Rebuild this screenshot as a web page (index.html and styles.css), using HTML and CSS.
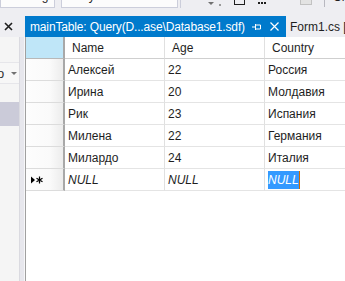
FILE: index.html
```html
<!DOCTYPE html>
<html lang="ru">

<head>
    <meta charset="UTF-8">
    <title>mainTable: Query</title>
    <link rel="stylesheet" href="styles.css">
</head>

<body>
    <div class="toolbar">
        <div class="tb-box tb-box1"><span class="tb-text">Debug</span></div>
        <div class="tb-box tb-box2"><span class="tb-text">Any CPU</span></div>
        <div class="tb-icons">
            <span class="tb-arrow"></span>
            <span class="tb-dots"></span>
            <span class="tb-square"></span>
            <span class="tb-more"></span>
            <span class="tb-grey"></span>
            <span class="tb-sep"></span>
            <span class="tb-label">Ch</span>
        </div>
    </div>

    <div class="tabrow">
        <div class="tool-close">
            <svg width="9" height="9" viewBox="0 0 9 9"><path d="M1 1L8 8M8 1L1 8" stroke="#1e1e1e" stroke-width="1.6"/></svg>
        </div>
        <div class="tab tab-active">
            <span class="tab-title">mainTable: Query(D...ase\Database1.sdf)</span>
            <svg class="tab-pin" width="9" height="8" viewBox="0 0 9 8"><path d="M0 4H3.5M3.5 1V7M3.5 2H8.5V6H3.5" stroke="#fff" fill="none" stroke-width="1"/></svg>
            <svg class="tab-x" width="9" height="9" viewBox="0 0 9 9"><path d="M0.5 0.5L8.5 8.5M8.5 0.5L0.5 8.5" stroke="#fff" stroke-width="1.2"/></svg>
        </div>
        <div class="tab">Form1.cs [</div>
    </div>

    <div class="workspace">
        <div class="side">
            <div class="combo"><span class="combo-text">o</span><span class="combo-arrow"></span></div>
            <div class="side-sel"></div>
        </div>
        <div class="splitter"></div>
        <div class="doc">
            <div class="grid">
                <div class="cell corner"></div>
                <div class="cell hcell">Name</div>
                <div class="cell hcell">Age</div>
                <div class="cell hcell">Country</div>

                <div class="cell rowhead"></div>
                <div class="cell">Алексей</div>
                <div class="cell">22</div>
                <div class="cell">Россия</div>

                <div class="cell rowhead"></div>
                <div class="cell">Ирина</div>
                <div class="cell">20</div>
                <div class="cell">Молдавия</div>

                <div class="cell rowhead"></div>
                <div class="cell">Рик</div>
                <div class="cell">23</div>
                <div class="cell">Испания</div>

                <div class="cell rowhead"></div>
                <div class="cell">Милена</div>
                <div class="cell">22</div>
                <div class="cell">Германия</div>

                <div class="cell rowhead"></div>
                <div class="cell">Милардо</div>
                <div class="cell">24</div>
                <div class="cell">Италия</div>

                <div class="cell rowhead">
                    <svg width="12" height="8" viewBox="0 0 12 8"><path d="M0 0.5L4 4L0 7.5Z" fill="#000"/><path d="M8.5 0.5V7.5M5.5 2.2L11.5 5.8M11.5 2.2L5.5 5.8" stroke="#000" stroke-width="1.2"/></svg>
                </div>
                <div class="cell null">NULL</div>
                <div class="cell null">NULL</div>
                <div class="cell null"><span class="editing">NULL</span></div>
            </div>
        </div>
    </div>
</body>

</html>
```

FILE: styles.css
```css
body {
    margin: 0;
    background-color: #fff;
    font-family: "Liberation Sans", Arial, sans-serif;
    font-size: 12px;
    color: #1e1e1e;
    overflow: hidden;
}

/* top toolbar, cut off at the top of the window */
.toolbar {
    height: 8px;
    background-color: #eeeef2;
    display: flex;
    overflow: hidden;
}

.tb-box {
    flex-shrink: 0;
    height: 7px;
    background-color: #fcfcfc;
    border: 1px solid #cccedb;
    border-top: none;
    overflow: hidden;
}

.tb-box1 {
    width: 53px;
}

.tb-box2 {
    width: 115px;
    margin-left: 6px;
}

.tb-text {
    display: block;
    margin-top: -11px;
    padding-left: 12px;
    line-height: 14px;
}

.tb-icons {
    flex: 1;
    display: flex;
    align-items: flex-start;
    border-left: 1px solid #cccedb;
    margin-left: 2px;
    padding-left: 27px;
}

.tb-arrow {
    width: 0;
    height: 0;
    margin-top: 2px;
    border-left: 3px solid transparent;
    border-right: 3px solid transparent;
    border-top: 3px solid #717171;
}

.tb-dots {
    width: 2px;
    height: 2px;
    margin: 4px 0 0 5px;
    background-color: #9a9a9a;
}

.tb-square {
    width: 9px;
    height: 4px;
    margin-left: 13px;
    border: 1px solid #1e1e1e;
    border-top: none;
}

.tb-more {
    width: 8px;
    height: 2px;
    margin: 2px 0 0 13px;
    background: repeating-linear-gradient(90deg, #1e1e1e 0 2px, transparent 2px 3px);
}

.tb-grey {
    width: 10px;
    height: 4px;
    margin-left: 34px;
    border: 1px solid #c2c2c2;
    border-top: none;
    background-color: #e3e3e3;
}

.tb-sep {
    width: 1px;
    height: 7px;
    margin-left: 12px;
    background-color: #b8b8c0;
}

.tb-label {
    margin: -10px 0 0 8px;
    line-height: 14px;
    color: #1e1e1e;
}

/* document tab strip */
.tabrow {
    height: 29px;
    display: flex;
    align-items: flex-end;
    background-color: #eeeef2;
}

.tool-close {
    flex-shrink: 0;
    width: 25px;
    height: 21px;
    display: flex;
    align-items: center;
    padding-left: 4px;
    box-sizing: border-box;
}

.tool-close svg {
    display: block;
}

.tab {
    height: 21px;
    display: flex;
    align-items: center;
    padding-left: 4px;
    white-space: nowrap;
}

.tab-active {
    flex-shrink: 0;
    width: 261px;
    box-sizing: border-box;
    background-color: #007acc;
    color: #fff;
    padding-left: 5px;
}

.tab-title {
    flex: 1;
    overflow: hidden;
    letter-spacing: -0.15px;
}

.tab-pin {
    flex-shrink: 0;
    margin-right: 9px;
}

.tab-x {
    flex-shrink: 0;
    margin-right: 7px;
}

/* main area */
.workspace {
    display: flex;
    height: 244px;
}

.side {
    flex-shrink: 0;
    width: 19px;
    background-color: #f5f5f5;
    border-right: 1px solid #dadae0;
    padding-top: 25px;
    overflow: hidden;
}

.combo {
    height: 20px;
    display: flex;
    align-items: center;
    border-top: 1px solid #e6e6ea;
    border-bottom: 1px solid #e6e6ea;
    background-color: #f7f7f7;
}

.combo-text {
    margin-left: -3px;
    font-size: 13px;
    color: #333;
}

.combo-arrow {
    width: 0;
    height: 0;
    margin-left: 7px;
    border-left: 3px solid transparent;
    border-right: 3px solid transparent;
    border-top: 3px solid #717171;
}

.side-sel {
    height: 24px;
    margin-top: 18px;
    background-color: #cbcbd9;
}

.splitter {
    flex-shrink: 0;
    width: 4px;
    background-color: #e7e7ed;
    border-right: 1px solid #f7f7f9;
}

.doc {
    flex: 1;
    min-width: 0;
    overflow: hidden;
    border-left: 1px solid #a0a0a0;
    background-color: #fff;
}

/* data grid */
.grid {
    display: grid;
    grid-template-columns: 39px 100px 100px 100px;
    grid-template-rows: 22px repeat(6, 22px);
    width: 339px;
}

.cell {
    display: flex;
    align-items: center;
    padding-left: 3px;
    white-space: nowrap;
    overflow: hidden;
    box-sizing: border-box;
    border-right: 1px solid #e0e0e0;
    border-bottom: 1px solid #e4e4e4;
}

.hcell {
    padding-left: 7px;
    border-bottom-color: #cfcfcf;
}

.corner {
    background-color: #bfe6f8;
    border-right: 2px solid #a8a8a8;
    border-bottom-color: #b8b8b8;
}

.rowhead {
    background: linear-gradient(90deg, #fdfdfd 0%, #fafafa 65%, #ececec 100%);
    border-right: 2px solid #a8a8a8;
    border-bottom-color: #dcdcdc;
    padding-left: 5px;
}

.rowhead svg {
    display: block;
}

.null {
    font-style: italic;
}

.editing {
    background-color: #3399ff;
    color: #fff;
    border-right: 1px solid #d26a00;
    padding: 2px 0;
}
```
